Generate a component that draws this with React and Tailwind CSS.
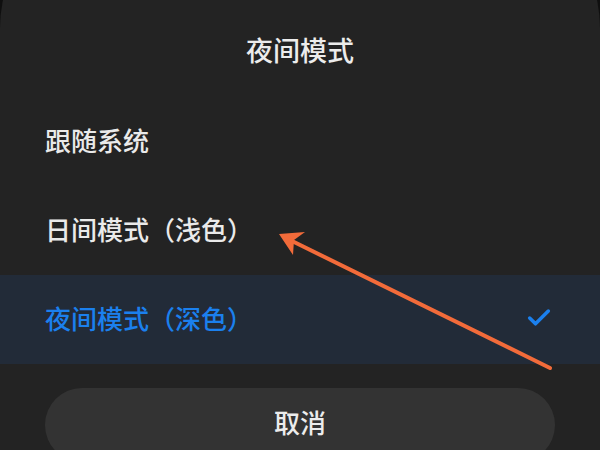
import { Check } from 'lucide-react';

const font = { fontFamily: '"Noto Sans CJK SC", "Noto Sans", sans-serif' };

const OPTIONS = [
  { id: 'system', label: '跟随系统' },
  { id: 'light', label: '日间模式（浅色）' },
  { id: 'dark', label: '夜间模式（深色）' },
];

export default function App() {
  const selected = 'dark';

  return (
    <div className="relative w-[600px] h-[450px] overflow-hidden bg-[#0f0f0f]" style={font}>
      {/* Sheet – top is cut off by the screenshot, only the corner edge shows */}
      <div className="-mt-[104px] pt-[104px] h-[554px] rounded-t-[132px] bg-[#232323]">
        <div className="h-[97px] pt-[1px] flex items-center justify-center">
          <h1 className="text-[27px] leading-none text-[#ececec] font-medium">夜间模式</h1>
        </div>

        <div className="flex flex-col">
          {OPTIONS.map(o => {
            const active = o.id === selected;
            return (
              <div
                key={o.id}
                className={`h-[89px] flex items-center justify-between pl-[45px] pr-[47px] pb-[4px] ${
                  active ? 'bg-[#222b38]' : ''
                }`}
              >
                <span
                  className={`text-[26px] leading-none font-medium ${
                    active ? 'text-[#1b80ee]' : 'text-[#eaeaea]'
                  }`}
                >
                  {o.label}
                </span>
                {active && <Check className="w-[28px] h-[28px] text-[#1b80ee]" strokeWidth={3} />}
              </div>
            );
          })}
        </div>

        <div className="px-[45px] pt-[24px]">
          <button className="w-full h-[74px] rounded-full bg-[#333333] text-[26px] leading-none font-medium text-[#ececec] pb-[6px]">
            取消
          </button>
        </div>
      </div>

      {/* Annotation arrow */}
      <svg className="absolute inset-0 pointer-events-none" width="600" height="450" viewBox="0 0 600 450">
        <line x1="550" y1="368" x2="292" y2="241" stroke="#f26b3a" strokeWidth="4" strokeLinecap="round" />
        <polygon points="279,234 305,232 294,240 293,255" fill="#f26b3a" />
      </svg>
    </div>
  );
}
